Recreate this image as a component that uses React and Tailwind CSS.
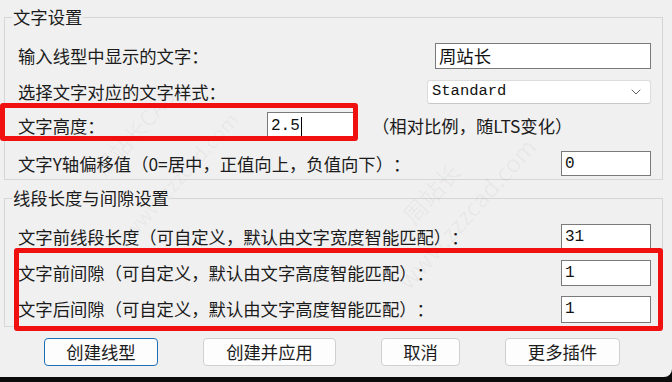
import { ChevronDown } from "lucide-react";

const cjk = { fontFamily: '"Noto Sans CJK SC", "Noto Sans", sans-serif' };
const mono = { fontFamily: '"Liberation Mono", "Noto Sans CJK SC", monospace' };

function TextBox({ value, className = "", font = mono, caret = false }) {
  return (
    <div
      className={`flex items-center border border-[#7a7a7a] bg-white pl-[3px] text-[15px] text-[#111] ${className}`}
      style={font}
    >
      <span>{value}</span>
      {caret && <span className="ml-[1px] h-[19px] w-px bg-black" />}
    </div>
  );
}

function Row({ label, children, className = "" }) {
  return (
    <div className={`flex items-center justify-between ${className}`}>
      <span className="leading-[24px]">{label}</span>
      {children}
    </div>
  );
}

function Button({ children, primary, className = "" }) {
  return (
    <button
      className={`flex h-[28px] items-center justify-center rounded-[4px] border bg-[#fdfdfd] text-[17.33px] leading-[24px] text-[#1b1b1b] ${
        primary ? "border-[#1f6fb8]" : "border-[#d0d0d0]"
      } ${className}`}
    >
      {children}
    </button>
  );
}

export default function App() {
  return (
    <div className="h-[382px] w-[672px] overflow-hidden bg-[#0c0c0c] [text-spacing-trim:space-all]" style={cjk}>
      <div className="relative h-[377px] w-[672px] overflow-hidden rounded-br-[8px] bg-[#f0f0f0] text-[17.33px] text-[#1b1b1b]">
        <fieldset className="ml-[4px] mt-[5px] w-[659px] border border-[#d6d6d6] pb-[3px] pl-[13px] pr-[11px]">
          <legend className="-ml-[6px] px-[1px] leading-[24px]">文字设置</legend>
          <Row label="输入线型中显示的文字：" className="mt-[14px] h-[26px]">
            <TextBox value="周站长" font={cjk} className="h-[26px] w-[216px] text-[17.33px]" />
          </Row>
          <Row label="选择文字对应的文字样式：" className="mt-[11px] h-[24px]">
            <div
              className="flex h-[24px] w-[224px] items-center justify-between rounded-[3px] border border-[#dcdcdc] border-b-[#c8c8c8] bg-white pl-[4px] pr-[6px] text-[15.5px] text-[#111]"
              style={mono}
            >
              <span>Standard</span>
              <ChevronDown size={16} strokeWidth={1.4} className="text-[#555]" />
            </div>
          </Row>
          <div className="mt-[8px] flex h-[28px] items-center">
            <span className="w-[249px] leading-[24px]">文字高度：</span>
            <TextBox value="2.5" caret className="h-[29px] w-[88px] text-[16px]" />
            <span className="ml-[17px] leading-[24px]">（相对比例，随LTS变化）</span>
          </div>
          <Row label="文字Y轴偏移值（0=居中，正值向上，负值向下）：" className="mt-[11px] h-[25px]">
            <TextBox value="0" className="h-[25px] w-[90px] text-[16px]" />
          </Row>
        </fieldset>

        <fieldset className="ml-[4px] mt-[6px] w-[659px] border border-[#d6d6d6] pb-[4px] pl-[13px] pr-[11px]">
          <legend className="-ml-[6px] px-[1px] leading-[24px]">线段长度与间隙设置</legend>
          <Row label="文字前线段长度（可自定义，默认由文字宽度智能匹配）：" className="mt-[14px] h-[26px]">
            <TextBox value="31" className="h-[26px] w-[90px] text-[16px]" />
          </Row>
          <Row label="文字前间隙（可自定义，默认由文字高度智能匹配）：" className="mt-[10px] h-[26px]">
            <TextBox value="1" className="h-[26px] w-[90px] text-[16px]" />
          </Row>
          <Row label="文字后间隙（可自定义，默认由文字高度智能匹配）：" className="mt-[10px] h-[26px]">
            <TextBox value="1" className="h-[27px] w-[90px] text-[16px]" />
          </Row>
        </fieldset>

        <div className="ml-[44px] mt-[11px] flex gap-[45px]">
          <Button primary className="w-[114px]">创建线型</Button>
          <Button className="w-[133px]">创建并应用</Button>
          <Button className="w-[79px]">取消</Button>
          <Button className="w-[115px]">更多插件</Button>
        </div>

        {/* watermark */}
        <span className="pointer-events-none absolute left-[80px] top-[115px] -rotate-[48deg] text-[22px] text-black/[0.045]">
          周站长CAD
        </span>
        <span className="pointer-events-none absolute left-[100px] top-[160px] -rotate-[48deg] text-[20px] text-black/[0.045]">
          www.zzzcad.com
        </span>
        <span className="pointer-events-none absolute left-[395px] top-[175px] -rotate-[48deg] text-[24px] text-black/[0.045]">
          周站长
        </span>
        <span className="pointer-events-none absolute left-[370px] top-[195px] -rotate-[48deg] text-[24px] text-black/[0.045]">
          www.zzzcad.com
        </span>

        {/* red annotation boxes */}
        <div className="pointer-events-none absolute left-0 top-[103px] h-[38px] w-[358px] rounded-[3px] border-[5px] border-[#f01010]" />
        <div className="pointer-events-none absolute left-[14px] top-[248px] h-[83px] w-[649px] rounded-[3px] border-[5px] border-[#f01010]" />
      </div>
    </div>
  );
}
